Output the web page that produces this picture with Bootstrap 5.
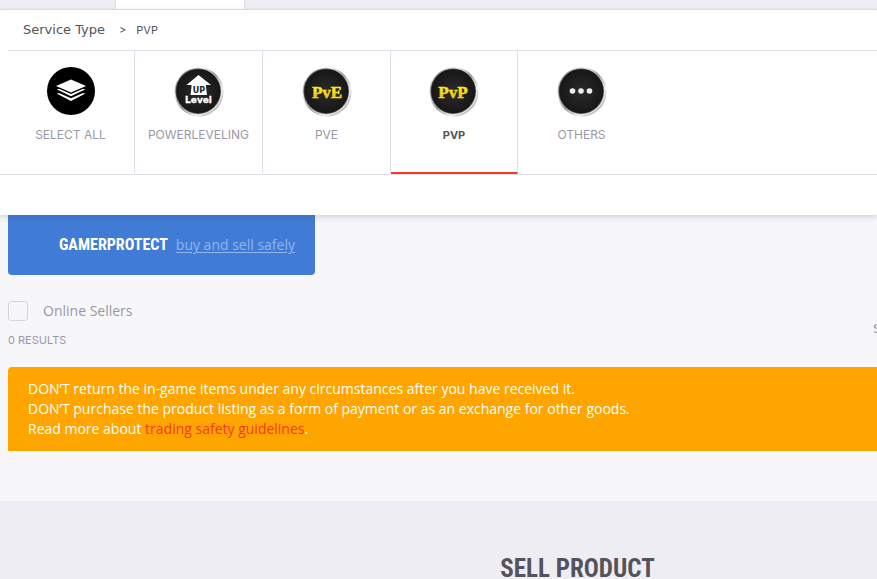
<!DOCTYPE html>
<html lang="en">
<head>
<meta charset="utf-8">
<meta name="viewport" content="width=device-width, initial-scale=1">
<title>Service type: PVP</title>
<link href="https://cdn.jsdelivr.net/npm/bootstrap@5.3.0/dist/css/bootstrap.min.css" rel="stylesheet">
<style>
body{font-family:"DejaVu Sans","Noto Sans",sans-serif;font-size:13px;line-height:20px;color:#54535b;background:#f7f7fa}
.line{border-color:#e0dfe8!important}
.tint{background:#eeedf3}
.tab-strip{height:10px}
.tab-gap{width:115px}
.tab-open{width:130px}
.filter-panel{height:205px;box-shadow:0 2px 6px rgba(60,50,90,.2)}
.crumbs{height:41px;padding-left:15px;margin-left:8px;gap:14px}
.crumb-root{font-size:13px}
.crumb-step{gap:10px}
.small-text{font-family:"Inter",sans-serif;font-size:11px}
.kinds{padding-left:7px}
.kind{width:128px;height:123px;padding-top:15px;gap:7px;font-family:"Inter",sans-serif;font-size:12px;color:#9998a6;border-right:1px solid #e0dfe8;border-bottom:2px solid transparent}
.kind:last-child{border-right-color:transparent}
.kind.active{width:127px;color:#54535b;font-weight:700;font-size:11px;border-bottom-color:#f43923}
.kind svg{width:52px;height:52px}
.wide-page{min-width:1155px;padding-left:8px}
.protect{width:307px;height:60px;background:#407cd6;padding-right:20px;gap:8px;border-radius:0 0 4px 4px}
.display-type{font-family:"Liberation Sans Narrow","Roboto Condensed",sans-serif;font-weight:700}
.protect .display-type{font-size:16px}
.soft-text{font-family:"Open Sans",sans-serif;font-size:14px}
.protect a{color:#91b5ec;text-underline-offset:2px}
.muted{color:#9998a6}
.results-bar{padding-top:24px;padding-bottom:17px}
.online-box{width:20px;height:20px;border:1px solid #d4d3de;border-radius:3px;background-color:transparent}
.online-label{margin-left:15px}
.sorter{width:282px;padding-top:20px}
.results-count{margin-top:7px}
.safety{background:#ffa500;padding:12px 20px;border-radius:4px 4px 0 0}
.safety a{color:#f43923}
.sell{min-width:1155px;margin-top:50px;padding-top:50px;height:200px}
.sell h2{font-size:25px;line-height:36px}
</style>
</head>
<body>
<div class="vh-100 overflow-hidden">
<div class="tab-strip tint d-flex border-bottom line"><div class="tab-gap"></div><div class="tab-open bg-white border-start border-end line"></div></div>
<header class="filter-panel bg-white position-relative">
<nav class="crumbs d-flex align-items-center border-bottom line" aria-label="Service">
<span class="crumb-root">Service Type</span><span class="crumb-step d-flex small-text"><span>&gt;</span><span>PVP</span></span>
</nav>
<nav class="kinds d-flex border-bottom line" aria-label="Service type">
<a href="#" class="kind d-flex flex-column align-items-center text-decoration-none"><svg viewBox="0 0 52 52"><circle cx="26" cy="25" r="24"/><g fill="#fff"><path d="M26 13.500 41 20 26 26.500 11 20Z"/><path d="m11.500 23.300 3-.3L26 28l11.500-5 3 .3L26 30.300Z"/><path d="m11.500 27.600 3-.3L26 32.200l11.500-4.900 3 .3L26 35Z"/></g></svg><span>SELECT ALL</span></a>
<a href="#" class="kind d-flex flex-column align-items-center text-decoration-none"><svg viewBox="0 0 52 52"><defs><linearGradient id="rim" x1="0" y1="0" x2="1" y2="1"><stop offset="0" stop-color="#666"/><stop offset=".12" stop-color="#999"/><stop offset=".3" stop-color="#ddd"/><stop offset=".5" stop-color="#888"/><stop offset=".7" stop-color="#eee"/><stop offset="1" stop-color="#888"/></linearGradient><radialGradient id="face"><stop offset="0" stop-color="#2b2b2b"/><stop offset="1" stop-color="#171717"/></radialGradient><g id="disc"><circle cx="26" cy="26" r="24.500" fill="url(#rim)"/><circle cx="25.600" cy="25.500" r="23.200" fill="#eee"/><circle cx="25.200" cy="25.200" r="22.800" fill="#555"/><circle cx="25.300" cy="25.200" r="22" fill="url(#face)"/></g></defs><use href="#disc"/><path fill="#fff" d="M25.500 9 38 19H33V21L34 29H17.500L18.500 21V19H13.500Z"/><text x="26" y="27" text-anchor="middle" font-family="DejaVu Sans" font-weight="700" font-size="8" fill="#222">UP</text><text x="25.500" y="37" text-anchor="middle" font-family="DejaVu Sans" font-weight="700" font-size="9" fill="#fff" stroke="#fff" stroke-width=".3">Level</text></svg><span>POWERLEVELING</span></a>
<a href="#" class="kind d-flex flex-column align-items-center text-decoration-none"><svg viewBox="0 0 52 52"><defs><linearGradient id="gold" x1="0" y1="0" x2="0" y2="1"><stop offset=".2" stop-color="#ffef20"/><stop offset="1" stop-color="#f3a414"/></linearGradient></defs><use href="#disc"/><text x="26" y="32" text-anchor="middle" font-family="Liberation Serif" font-weight="700" font-size="17" fill="url(#gold)" stroke="#ffe31c" stroke-width=".5">PvE</text></svg><span>PVE</span></a>
<a href="#" class="kind active d-flex flex-column align-items-center text-decoration-none" aria-current="page"><svg viewBox="0 0 52 52"><use href="#disc"/><text x="25" y="32" text-anchor="middle" font-family="Liberation Serif" font-weight="700" font-size="17" fill="url(#gold)" stroke="#ffe31c" stroke-width=".5">PvP</text></svg><span>PVP</span></a>
<a href="#" class="kind d-flex flex-column align-items-center text-decoration-none"><svg viewBox="0 0 52 52"><use href="#disc"/><g fill="#eee"><circle cx="16.500" cy="25" r="2.800"/><circle cx="25" cy="25" r="2.800"/><circle cx="33.500" cy="25" r="2.800"/></g></svg><span>OTHERS</span></a>
</nav>
</header>
<main class="wide-page">
<div class="protect d-flex align-items-center justify-content-end"><span class="display-type text-white">GAMERPROTECT</span><a href="#" class="soft-text">buy and sell safely</a></div>
<div class="results-bar d-flex justify-content-between">
<div><div class="form-check d-flex align-items-center p-0 m-0"><input class="form-check-input online-box m-0" type="checkbox" id="online"><label class="muted soft-text online-label" for="online">Online Sellers</label></div>
<div class="small-text muted results-count">0 RESULTS</div></div>
<div class="sorter muted">Sort by</div>
</div>
<div class="safety soft-text text-white">DON’T return the in-game items under any circumstances after you have received it.<br>DON’T purchase the product listing as a form of payment or as an exchange for other goods.<br>Read more about <a href="#" class="text-decoration-none">trading safety guidelines</a>.</div>
</main>
<section class="sell tint text-center"><h2 class="display-type m-0">SELL PRODUCT</h2></section>
</div>
<script src="https://cdn.jsdelivr.net/npm/bootstrap@5.3.0/dist/js/bootstrap.bundle.min.js"></script>
</body>
</html>
